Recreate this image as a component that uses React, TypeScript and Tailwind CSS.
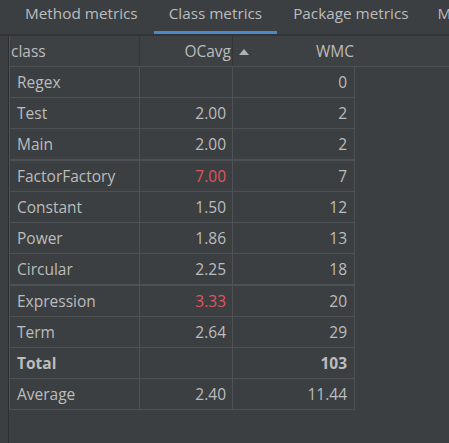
import React from "react";

type Row = { name: string; oc: string; wmc: string; red?: boolean; bold?: boolean; thick?: boolean };

const rows: Row[] = [
  { name: "Regex", oc: "", wmc: "0" },
  { name: "Test", oc: "2.00", wmc: "2" },
  { name: "Main", oc: "2.00", wmc: "2" },
  { name: "FactorFactory", oc: "7.00", wmc: "7", red: true, thick: true },
  { name: "Constant", oc: "1.50", wmc: "12" },
  { name: "Power", oc: "1.86", wmc: "13" },
  { name: "Circular", oc: "2.25", wmc: "18" },
  { name: "Expression", oc: "3.33", wmc: "20", red: true, thick: true },
  { name: "Term", oc: "2.64", wmc: "29" },
  { name: "Total", oc: "", wmc: "103", bold: true },
  { name: "Average", oc: "2.40", wmc: "11.44" },
];

export default function App() {
  return (
    <div
      className="w-[449px] h-[443px] bg-[#3c3f41] flex flex-col overflow-hidden text-[#bbbcbd]"
      style={{ fontFamily: '"Open Sans", "Noto Sans", sans-serif' }}
    >
      {/* tab bar */}
      <div className="h-[34px] flex pl-[9px] text-[15.3px] leading-[20px] shrink-0 whitespace-nowrap overflow-hidden">
        <div className="relative px-[16px] pt-[3px] shrink-0">Method metrics</div>
        <div className="relative px-[15px] pt-[3px] shrink-0">
          Class metrics
          <div className="absolute left-0 right-0 bottom-0 h-[3px] bg-[#4a88c7]" />
        </div>
        <div className="relative px-[16px] pt-[3px] shrink-0">Package metrics</div>
        <div className="relative pl-[13px] pt-[3px] shrink-0">M</div>
      </div>
      <div className="h-[2px] bg-[#313335] shrink-0" />
      <div className="flex flex-1">
        <div className="w-[8px] border-r border-[#2d2f31] shrink-0 box-content" />
        <div className="flex-1 flex flex-col">
          {/* header */}
          <div className="h-[31px] flex border-b border-l border-[#4f5254] bg-[#3e4143] text-[15.5px] leading-[30px] shrink-0">
            <div className="w-[130px] pl-[1px] border-r border-[#333537] shrink-0">class</div>
            <div className="w-[93px] border-r border-[#333537] shrink-0 relative">
              <span className="absolute right-[1px] top-0">OCavg</span>
              <svg className="absolute left-[99px] top-[13px]" width="10" height="6" viewBox="0 0 10 6">
                <path d="M5 0 L10 6 L0 6 Z" fill="#aeb1b3" />
              </svg>
            </div>
            <div className="w-[121px] shrink-0 text-right">WMC</div>
            <div className="flex-1" />
          </div>
          {/* rows */}
          <div className="w-[346px] border-l border-r border-[#4f5254]">
            {rows.map((r) => (
              <div
                key={r.name}
                className={`flex text-[15.5px] leading-[30px] h-[31px] border-b border-[#4f5254] ${
                  r.thick ? "h-[32px] border-t border-t-[#4f5254]" : ""
                } ${r.bold ? "font-bold" : ""}`}
              >
                <div className="w-[130px] pl-[7px] border-r border-[#4f5254] shrink-0">{r.name}</div>
                <div
                  className={`w-[93px] pr-[6px] text-right border-r border-[#4f5254] shrink-0 ${
                    r.red ? "text-[#e0545f]" : ""
                  }`}
                >
                  {r.oc}
                </div>
                <div className="flex-1 pr-[7px] text-right">{r.wmc}</div>
              </div>
            ))}
          </div>
        </div>
      </div>
    </div>
  );
}
